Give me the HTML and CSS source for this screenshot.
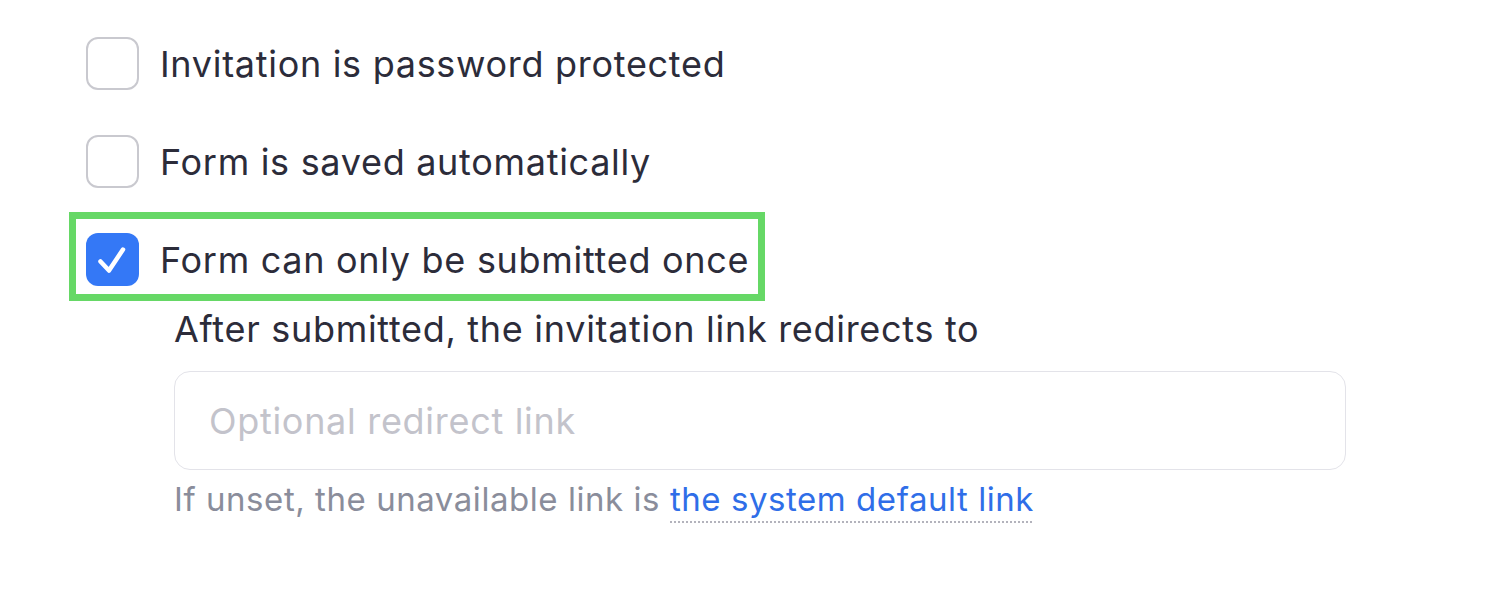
FILE: index.html
```html
<!DOCTYPE html>
<html>
<head>
<meta charset="utf-8">
<link rel="stylesheet" href="styles.css">
</head>
<body>
<div class="settings">
  <label class="option">
    <span class="box"></span>
    <span class="label">Invitation is password protected</span>
  </label>
  <label class="option">
    <span class="box"></span>
    <span class="label">Form is saved automatically</span>
  </label>
  <label class="option highlighted">
    <span class="box checked">
      <svg viewBox="0 0 53 53" width="53" height="53"><path d="M14.5 28.5 L23 37.5 L37 16.5" fill="none" stroke="#fff" stroke-width="4.5" stroke-linecap="round" stroke-linejoin="round"/></svg>
    </span>
    <span class="label">Form can only be submitted once</span>
  </label>
  <div class="sub">
    <div class="sub-title">After submitted, the invitation link redirects to</div>
    <div class="input">Optional redirect link</div>
    <div class="help">If unset, the unavailable link is <span class="link">the system default link</span></div>
  </div>
</div>
</body>
</html>
```
FILE: styles.css
```css
html, body {
  margin: 0;
  padding: 0;
  background: #ffffff;
}
body {
  font-family: "Inter", "Liberation Sans", sans-serif;
  color: #2c2c3a;
  letter-spacing: 0.7px;
}
.settings {
  padding: 37px 0 0 86px;
  display: flex;
  flex-direction: column;
  align-items: flex-start;
}
.option {
  display: flex;
  align-items: center;
  gap: 21px;
  height: 53px;
  margin-bottom: 45px;
  position: relative;
}
.option.highlighted {
  margin-bottom: 0;
}
.option.highlighted::after {
  content: "";
  position: absolute;
  left: -17px;
  right: -16px;
  top: -21px;
  bottom: -15px;
  border: 7px solid #66d866;
}
.box {
  width: 53px;
  height: 53px;
  box-sizing: border-box;
  border: 2px solid #c9c9cf;
  border-radius: 12px;
  background: #fff;
  flex: none;
  display: block;
}
.box.checked {
  background: #3478f6;
  border: none;
}
.box svg {
  display: block;
}
.label {
  font-size: 36px;
  line-height: 40px;
  white-space: nowrap;
}
.sub {
  margin-left: 88px;
  margin-top: 23px;
}
.sub-title {
  font-size: 36px;
  line-height: 40px;
  white-space: nowrap;
}
.input {
  margin-top: 22px;
  width: 1172px;
  height: 99px;
  box-sizing: border-box;
  border: 1.5px solid #e3e3e9;
  border-radius: 16px;
  padding-left: 34px;
  display: flex;
  align-items: center;
  font-size: 36px;
  color: #c3c3cb;
}
.help {
  margin-top: 9px;
  font-size: 33px;
  line-height: 40px;
  color: #8a8d9b;
  white-space: nowrap;
  letter-spacing: 0.55px;
}
.link {
  color: #2f6ee8;
  display: inline-block;
  line-height: 40px;
  padding-bottom: 4px;
  vertical-align: top;
  background-image: linear-gradient(to right, #b3b3bc 50%, transparent 50%);
  background-size: 4px 2px;
  background-repeat: repeat-x;
  background-position: left bottom;
}
```
